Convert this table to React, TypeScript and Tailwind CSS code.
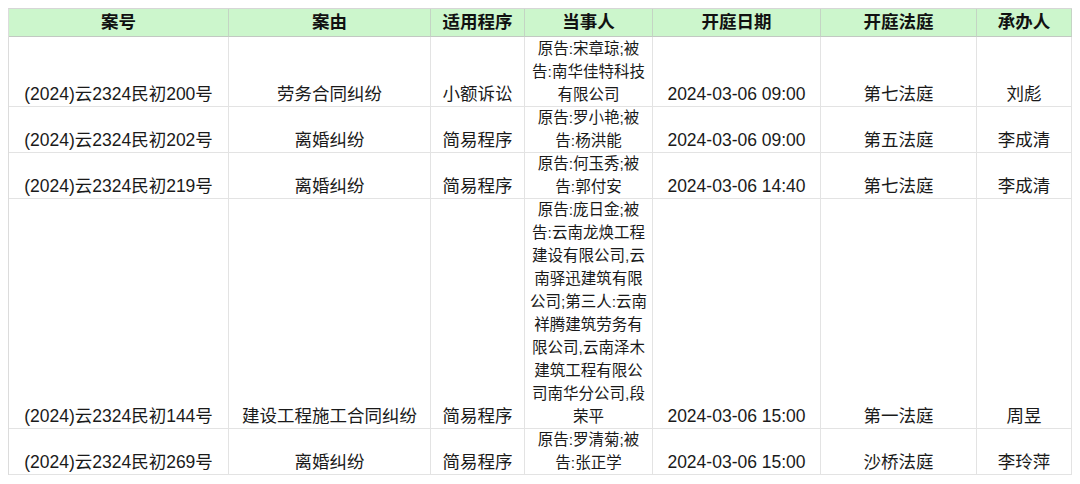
import React from "react";

const headers = ["案号", "案由", "适用程序", "当事人", "开庭日期", "开庭法庭", "承办人"];

type Row = {
  no: string;
  reason: string;
  proc: string;
  party: string[];
  date: string;
  court: string;
  judge: string;
  h: string;
};

const rows: Row[] = [
  {
    no: "(2024)云2324民初200号",
    reason: "劳务合同纠纷",
    proc: "小额诉讼",
    party: ["原告:宋章琼;被", "告:南华佳特科技", "有限公司"],
    date: "2024-03-06 09:00",
    court: "第七法庭",
    judge: "刘彪",
    h: "h-[70px]",
  },
  {
    no: "(2024)云2324民初202号",
    reason: "离婚纠纷",
    proc: "简易程序",
    party: ["原告:罗小艳;被", "告:杨洪能"],
    date: "2024-03-06 09:00",
    court: "第五法庭",
    judge: "李成清",
    h: "h-[46px]",
  },
  {
    no: "(2024)云2324民初219号",
    reason: "离婚纠纷",
    proc: "简易程序",
    party: ["原告:何玉秀;被", "告:郭付安"],
    date: "2024-03-06 14:40",
    court: "第七法庭",
    judge: "李成清",
    h: "h-[46px]",
  },
  {
    no: "(2024)云2324民初144号",
    reason: "建设工程施工合同纠纷",
    proc: "简易程序",
    party: [
      "原告:庞日金;被",
      "告:云南龙焕工程",
      "建设有限公司,云",
      "南驿迅建筑有限",
      "公司;第三人:云南",
      "祥腾建筑劳务有",
      "限公司,云南泽木",
      "建筑工程有限公",
      "司南华分公司,段",
      "荣平",
    ],
    date: "2024-03-06 15:00",
    court: "第一法庭",
    judge: "周昱",
    h: "h-[230px]",
  },
  {
    no: "(2024)云2324民初269号",
    reason: "离婚纠纷",
    proc: "简易程序",
    party: ["原告:罗清菊;被", "告:张正学"],
    date: "2024-03-06 15:00",
    court: "沙桥法庭",
    judge: "李玲萍",
    h: "h-[46px]",
  },
];

const font = {
  fontFamily: '"Liberation Sans", "Noto Sans CJK SC", sans-serif',
};

export default function App() {
  return (
    <div className="w-[1080px] h-[484px] bg-white p-2" style={font}>
      <div className="grid grid-cols-[220px_202px_94px_128px_168px_156px_95px] border-t border-l border-t-[#d6d6d6] border-l-[#dcdcdc] text-[#1a1a1a]">
        {headers.map((h) => (
          <div
            key={h}
            className="h-[28px] flex items-center justify-center bg-[#ccf6cc] border-r border-b border-r-[#c4d4c4] border-b-[#c2c9c2] text-[17.5px] font-semibold text-[#111]"
          >
            {h}
          </div>
        ))}
        {rows.map((r) => {
          const base =
            r.h +
            " border-r border-b border-[#e3e3e3] text-center whitespace-nowrap";
          const cell = base + " flex items-end justify-center text-[17.5px] leading-[23px]";
          return (
            <React.Fragment key={r.no}>
              <div className={cell}>{r.no}</div>
              <div className={cell}>{r.reason}</div>
              <div className={cell}>{r.proc}</div>
              <div className={base + " flex flex-col justify-end items-center"}>
                {r.party.map((p, i) => (
                  <span key={i} className="block text-[15.5px] leading-[23px]">
                    {p}
                  </span>
                ))}
              </div>
              <div className={cell}>{r.date}</div>
              <div className={cell}>{r.court}</div>
              <div className={cell}>{r.judge}</div>
            </React.Fragment>
          );
        })}
      </div>
    </div>
  );
}
